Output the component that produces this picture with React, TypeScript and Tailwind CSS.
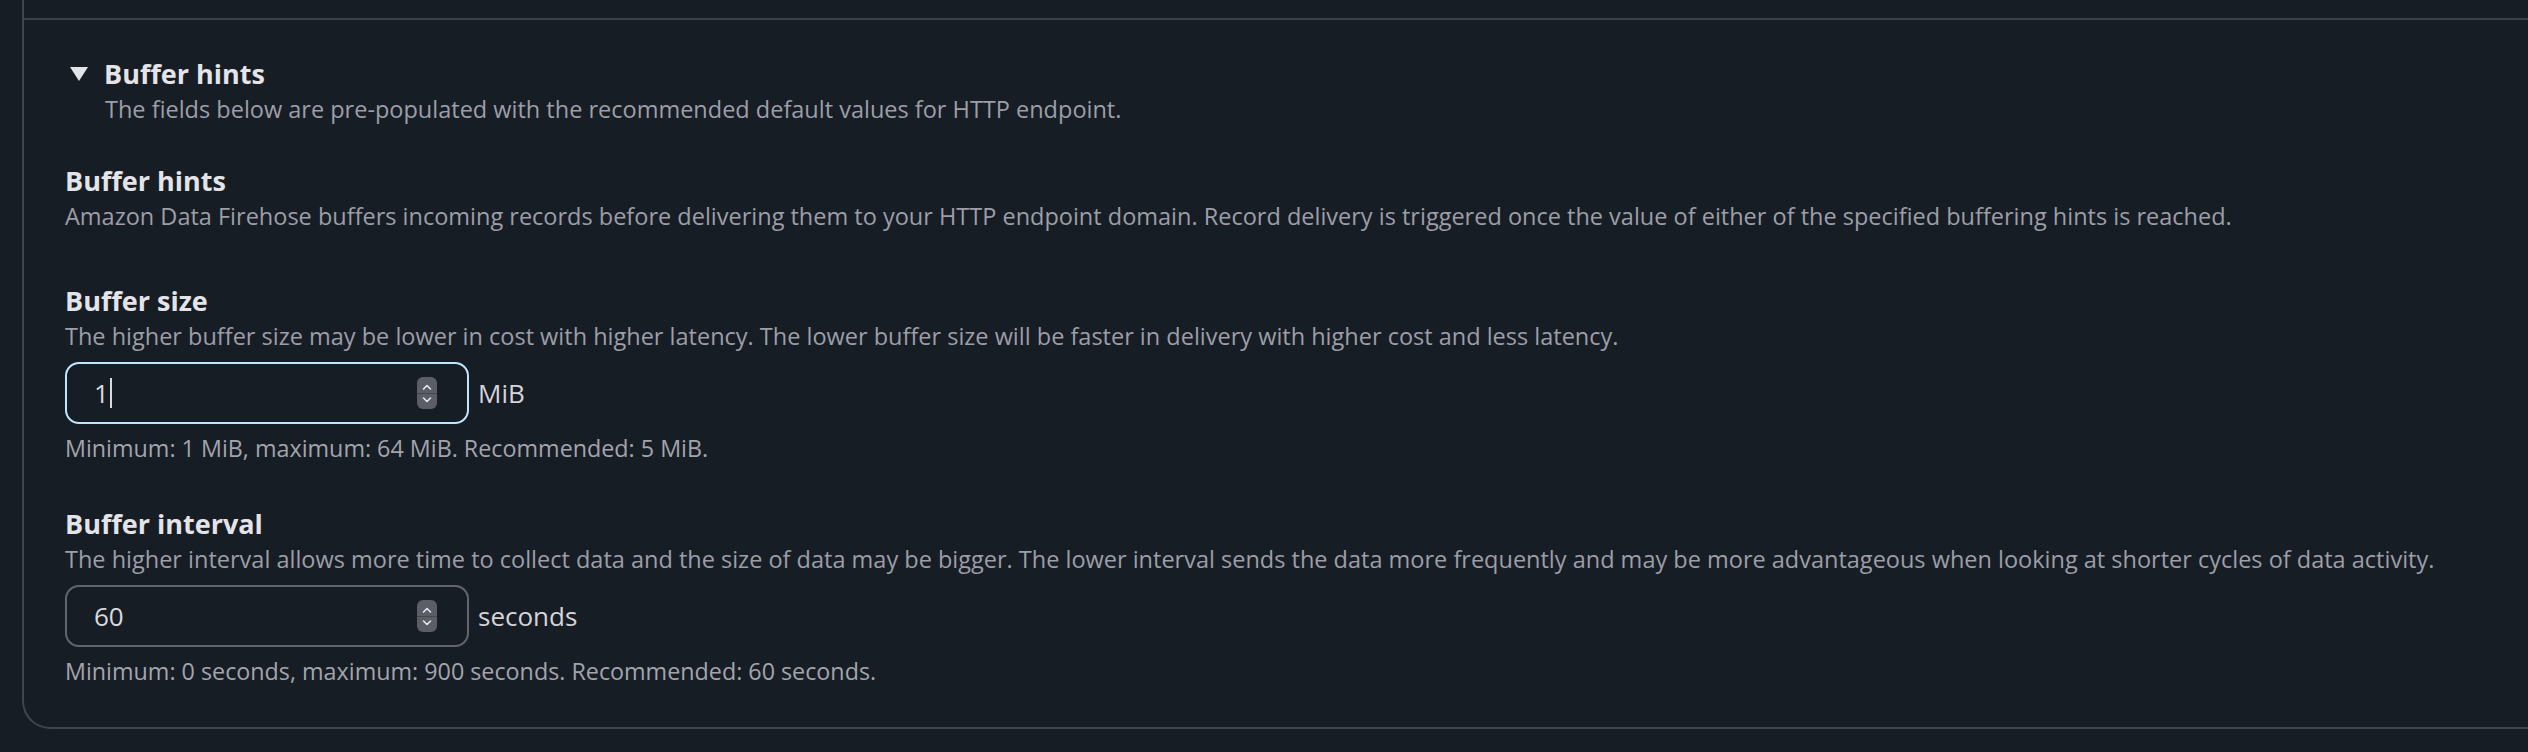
import { useState } from 'react';

const font = { fontFamily: '"Open Sans", "Noto Sans", sans-serif' };

function Stepper() {
  return (
    <div className="flex h-[32px] w-[20px] flex-col items-center justify-center rounded-[6px] bg-[#5b5e66]">
      <svg width="12" height="10" viewBox="0 0 12 10" className="mb-[1px]">
        <path d="M2.5 7 L6 3.5 L9.5 7" fill="none" stroke="#e6e7ea" strokeWidth="1.6" strokeLinecap="round" strokeLinejoin="round" />
      </svg>
      <div className="h-px w-full bg-[#45484f]" />
      <svg width="12" height="10" viewBox="0 0 12 10" className="mt-[1px]">
        <path d="M2.5 3 L6 6.5 L9.5 3" fill="none" stroke="#e6e7ea" strokeWidth="1.6" strokeLinecap="round" strokeLinejoin="round" />
      </svg>
    </div>
  );
}

function NumberField({
  label,
  description,
  value,
  unit,
  constraint,
  focused,
}: {
  label: string;
  description: string;
  value: string;
  unit: string;
  constraint: string;
  focused?: boolean;
}) {
  return (
    <div className="flex flex-col">
      <div className="text-[27px] font-bold leading-[36px] text-[#e4e4e8]">{label}</div>
      <div className="text-[23.5px] leading-[34px] text-[#9d9ea7]">{description}</div>
      <div className="mt-[9px] flex items-center gap-[9px]">
        <div
          className={`flex h-[62px] w-[404px] items-center justify-between rounded-[14px] border-2 pl-[27px] pr-[30px] ${
            focused ? 'border-[#bfe6ff]' : 'border-[#62656d]'
          }`}
        >
          <div className="flex items-center text-[26px] text-[#d9d9de]">
            {value}
            {focused && <span className="ml-[1px] inline-block h-[30px] w-[2px] bg-[#d9d9de]" />}
          </div>
          <Stepper />
        </div>
        <span className="text-[26px] text-[#d4d4d9]">{unit}</span>
      </div>
      <div className="mt-[7px] text-[23.3px] leading-[34px] text-[#a3a4ac]">{constraint}</div>
    </div>
  );
}

export default function App() {
  const [open] = useState(true);

  return (
    <div className="h-[752px] w-full overflow-hidden bg-[#171d25]" style={font}>
      <div className="ml-[22px] h-[729px] rounded-bl-[28px] border-b-2 border-l-2 border-[#41444c]">
        <div className="h-[18px]" />
        <div className="border-t-2 border-[#3c3f47] pl-[41px] pt-[36px]">
          {/* Expandable section header */}
          <div className="flex items-center gap-[15px]">
            <svg width="20" height="16" viewBox="0 0 20 16" className="ml-[4px]">
              <path d="M1 1 H19 L10 15 Z" fill="#e4e4e8" />
            </svg>
            <span className="text-[27px] font-bold leading-[36px] text-[#e4e4e8]">Buffer hints</span>
          </div>
          <div className="pl-[40px] text-[23.5px] leading-[34px] text-[#9d9ea7]">
            The fields below are pre-populated with the recommended default values for HTTP endpoint.
          </div>

          {open && (
            <div className="mt-[37px] flex flex-col">
              <div className="text-[27px] font-bold leading-[36px] text-[#e4e4e8]">Buffer hints</div>
              <div className="text-[23.5px] leading-[34px] text-[#9d9ea7]">
                Amazon Data Firehose buffers incoming records before delivering them to your HTTP endpoint domain. Record delivery is triggered once the value of either of the specified buffering hints is reached.
              </div>

              <div className="mt-[50px] flex flex-col gap-[41px]">
                <NumberField
                  label="Buffer size"
                  description="The higher buffer size may be lower in cost with higher latency. The lower buffer size will be faster in delivery with higher cost and less latency."
                  value="1"
                  unit="MiB"
                  constraint="Minimum: 1 MiB, maximum: 64 MiB. Recommended: 5 MiB."
                  focused
                />
                <NumberField
                  label="Buffer interval"
                  description="The higher interval allows more time to collect data and the size of data may be bigger. The lower interval sends the data more frequently and may be more advantageous when looking at shorter cycles of data activity."
                  value="60"
                  unit="seconds"
                  constraint="Minimum: 0 seconds, maximum: 900 seconds. Recommended: 60 seconds."
                />
              </div>
            </div>
          )}
        </div>
      </div>
    </div>
  );
}
